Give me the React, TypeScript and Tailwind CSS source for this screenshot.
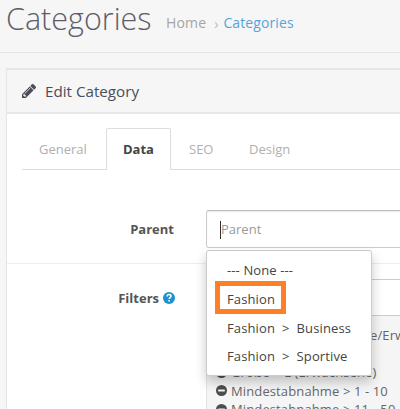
import React from 'react';

function Pencil() {
  return (
    <svg viewBox="0 149 1515 1515" className="h-[14px] w-[14px] shrink-0 fill-[#4c4d5a]">
      <path d="M363 1536l91-91-235-235-91 91v107h128v128h107zM886 608q0-22-22-22-10 0-17 7l-542 542q-7 7-7 17 0 22 22 22 10 0 17-7l542-542q7-7 7-17zM832 416l416 416-832 832h-416v-416zM1515 512q0 53-37 90l-166 166-416-416 166-165q36-38 90-38 53 0 91 38l235 234q37 39 37 91z" />
    </svg>
  );
}

function Minus() {
  return (
    <svg viewBox="0 0 12 12" className="mr-1 h-[11px] w-[11px] shrink-0">
      <circle cx="6" cy="6" r="6" fill="#4d4d4d" />
      <rect x="2.3" y="4.9" width="7.4" height="2.2" rx="0.5" fill="#f5f5f5" />
    </svg>
  );
}

function Help() {
  return (
    <svg viewBox="0 0 12 12" className="ml-1 h-3 w-3 shrink-0">
      <circle cx="6" cy="6" r="6" fill="#1e91cf" />
      <path d="M4.1 4.5C4.2 3.1 5 2.6 6 2.6c1.100 0 2 .6 2 1.700 0 1.300-1.800 1.400-1.800 2.600" fill="none" stroke="#fff" strokeWidth="1.500" />
      <rect x="5.300" y="8" width="1.600" height="1.500" fill="#fff" />
    </svg>
  );
}

const options = ['--- None ---', 'Fashion', 'Fashion\u00a0 >\u00a0 Business', 'Fashion\u00a0 >\u00a0 Sportive'];

export default function App() {
  return (
    <div className="h-[409px] w-[400px] overflow-hidden bg-[#f6f6f6] font-['Open_Sans','Liberation_Sans',sans-serif] text-[13px] leading-[18px] text-[#666]">
      <header className="flex h-[53px] border-b border-[#e5e5e5] pl-[6px]">
        <h1 className="-mt-[2px] w-[160px] shrink-0 text-[30.500px] leading-[40px] font-light text-[#5c5d69]">Categories</h1>
        <nav className="flex pt-[14px] text-[14px] text-[#a5a5a5]">
          <span className="tracking-[0.150px]">Home</span>
          <span className="mr-[5px] ml-[8px] pt-px text-[#bbb]">›</span>
          <span className="tracking-[0.100px] text-[#55a5d8]">Categories</span>
        </nav>
      </header>
      <main className="mt-[15px] ml-[6px] h-[341px] w-[460px] border-t-2 border-l border-[#e5e5e5] bg-white">
        <div className="flex h-[44px] items-center border-b-2 border-[#e8e8e8] bg-[#f6f6f6] pb-px pl-[15px] text-[15.200px] text-[#4c4d5a]">
          <Pencil />
          <h2 className="ml-[9px]">Edit Category</h2>
        </div>
        <div className="ml-[15px] flex h-[56px] items-end border-b border-[#ddd] text-[#b0b0b0]">
          <div className="h-[41px] w-[84px] pt-[12px] pl-[17px]">General</div>
          <div className="-mb-px h-[42px] w-[65px] rounded-t-[2px] border border-b-0 border-[#ddd] bg-white pt-[11px] text-center font-bold text-[#444]">Data</div>
          <div className="h-[41px] w-[60px] pt-[12px] pl-[18px]">SEO</div>
          <div className="h-[41px] pt-[12px] pl-[18px]">Design</div>
        </div>
        <div className="flex h-[94px] border-b border-[#ededed] pt-[40px]">
          <label className="w-[167px] shrink-0 pt-[10px] text-right font-bold text-[#555]">Parent</label>
          <div className="relative ml-[32px] h-[38px] w-[240px] shrink-0 rounded-[3px] border border-[#ccc] border-t-[#bbb] pt-[9px] pl-[14px] text-[#999] shadow-[inset_0_1px_1px_rgba(0,0,0,0.08)]">
            <span className="absolute top-[10px] left-[13px] h-[18px] w-px bg-[#333]" />
            Parent
            <ul className="absolute top-[39px] -left-px h-[126px] w-[166px] rounded-[3px] border border-[#ccc] bg-white pt-[5px] tracking-[0.120px] text-[#444] shadow-[0_6px_12px_rgba(0,0,0,0.22)]">
              {options.map((option) => (
                <li key={option} className="h-[28.800px] pt-[5px] pl-[20px] whitespace-pre">{option}</li>
              ))}
              <li aria-hidden="true" className="absolute top-[30px] left-[8px] h-[33px] w-[71px] border-[5px] border-[#ff7f27]" />
            </ul>
          </div>
        </div>
        <div className="flex pt-[15px]">
          <div className="flex h-[38px] w-[168px] shrink-0 items-center justify-end font-bold text-[#555]">
            Filters
            <Help />
          </div>
          <div className="ml-[31px] w-[240px] shrink-0">
            <div className="h-[37px] rounded-[3px] border border-[#ccc] bg-white" />
            <div className="h-[120px] border border-t-0 border-[#e3e3e3] bg-[#f5f5f5] pt-[10px] pl-[9px] tracking-[0.120px]">
              <div className="h-[37px] pl-[154px] whitespace-nowrap">e/Erwachsene</div>
              {['Größe > L (Erwachsene)', 'Mindestabnahme > 1 - 10', 'Mindestabnahme > 11 - 50'].map((item) => (
                <div key={item} className="flex h-[18.500px] items-center whitespace-nowrap">
                  <Minus />
                  {item}
                </div>
              ))}
            </div>
          </div>
        </div>
      </main>
    </div>
  );
}
